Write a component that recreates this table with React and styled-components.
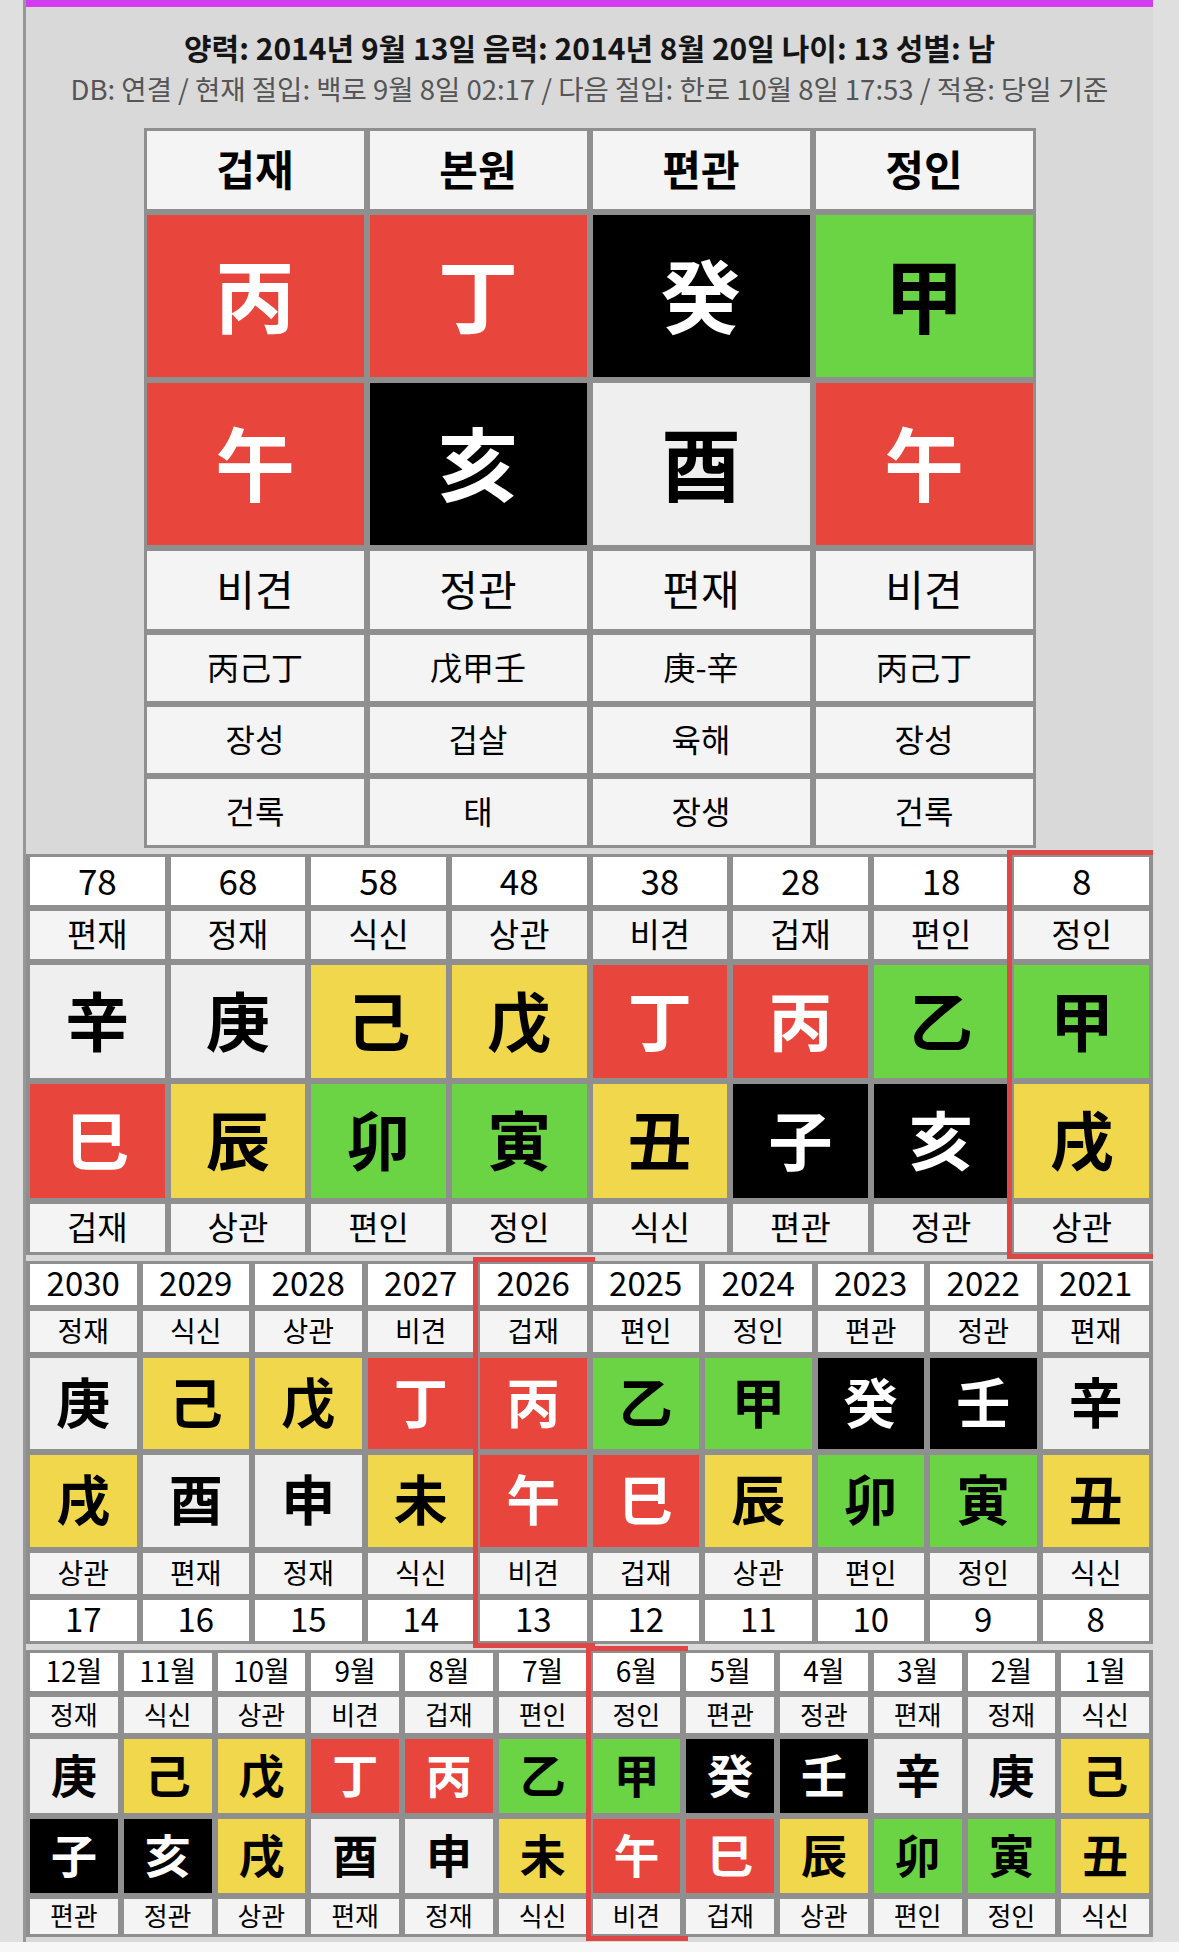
import React from 'react';
import styled, { createGlobalStyle, css } from 'styled-components';

const GlobalStyle = createGlobalStyle`
  html, body {
    margin: 0;
    padding: 0;
    background: #dfdfdf;
  }
  body {
    font-family: "Noto Sans CJK KR", "Noto Sans", sans-serif;
    color: #000;
  }
`;

const ELEMENT = {
  甲: 'wood', 乙: 'wood', 寅: 'wood', 卯: 'wood',
  丙: 'fire', 丁: 'fire', 巳: 'fire', 午: 'fire',
  戊: 'earth', 己: 'earth', 辰: 'earth', 戌: 'earth', 丑: 'earth', 未: 'earth',
  庚: 'metal', 辛: 'metal', 申: 'metal', 酉: 'metal',
  壬: 'water', 癸: 'water', 亥: 'water', 子: 'water',
};

const PALETTE = {
  wood: { bg: '#6bd445', fg: '#000' },
  fire: { bg: '#e8453c', fg: '#fff' },
  earth: { bg: '#f0d74b', fg: '#000' },
  metal: { bg: '#efefef', fg: '#000' },
  water: { bg: '#000', fg: '#fff' },
};

const Page = styled.div`
  width: 1179px;
  min-height: 1952px;
  display: flex;
  flex-direction: column;
`;

const Panel = styled.div`
  margin-left: 23px;
  width: 1130px;
  box-sizing: border-box;
  border-left: 3px solid #979797;
  background: #d9d9d9;
  display: flex;
  flex-direction: column;
  padding-bottom: 5px;
  overflow: hidden;
`;

const TopBar = styled.div`
  height: 7px;
  background: #d03ef0;
`;

const Info = styled.div`
  padding-top: 20px;
  text-align: center;
`;

const InfoMain = styled.div`
  font-size: 30px;
  line-height: 40px;
  font-weight: 700;
  color: #151515;
`;

const InfoSub = styled.div`
  margin-top: 3px;
  font-size: 27.5px;
  line-height: 36px;
  color: #555;
`;

const Table = styled.div`
  display: flex;
  gap: 6px;
  background: #8f8f8f;
  padding: 3px 4px;
  margin-top: 6px;

  ${p => p.$fixed && css`
    width: ${p.$fixed}px;
    box-sizing: border-box;
    padding: 3px;
    align-self: center;
    margin-top: 22px;
  `}
`;

/* current period marker: the right edge sits under the next column */
const Column = styled.div`
  flex: 1 1 0;
  min-width: 0;
  display: flex;
  flex-direction: column;
  gap: 6px;
  position: relative;

  ${p => p.$active && css`
    &::after {
      content: '';
      position: absolute;
      top: -7px;
      bottom: -7px;
      left: -7px;
      right: -8px;
      border: 5px solid #df4747;
      border-right: 0;
      pointer-events: none;
      z-index: 2;
    }
  `}
`;

const Cell = styled.div`
  box-sizing: border-box;
  height: ${p => p.$h}px;
  padding-bottom: 0.11em;
  background: ${p => p.$bg};
  color: ${p => p.$fg};
  font-size: ${p => p.$size}px;
  font-weight: ${p => (p.$bold ? 700 : 400)};
  display: flex;
  align-items: center;
  justify-content: center;
  line-height: 1;
  white-space: nowrap;
`;

const BottomStrip = styled.div`
  height: 10px;
  background: #f7f7f7;
`;

function GridTable({ columns, rows, active, fixed }) {
  return (
    <Table $fixed={fixed}>
      {columns.map((col, i) => (
        <Column key={i} $active={i === active}>
          {rows.map(r => {
            const value = col[r.key];
            const tone = r.glyph ? PALETTE[ELEMENT[value]] : { bg: r.bg, fg: '#000' };
            return (
              <Cell
                key={r.key}
                $h={r.h}
                $size={r.size}
                $bold={r.bold || r.glyph}
                $bg={tone.bg}
                $fg={tone.fg}
              >
                {value}
              </Cell>
            );
          })}
        </Column>
      ))}
    </Table>
  );
}

const zip = (fields) =>
  fields[Object.keys(fields)[0]].map((_, i) =>
    Object.fromEntries(Object.entries(fields).map(([k, arr]) => [k, arr[i]]))
  );

const natal = zip({
  head: ['겁재', '본원', '편관', '정인'],
  stem: [...'丙丁癸甲'],
  branch: [...'午亥酉午'],
  god: ['비견', '정관', '편재', '비견'],
  hidden: ['丙己丁', '戊甲壬', '庚-辛', '丙己丁'],
  stage: ['장성', '겁살', '육해', '장성'],
  star: ['건록', '태', '장생', '건록'],
});

const natalRows = [
  { key: 'head', h: 78, size: 42, bold: true, bg: '#f4f4f4' },
  { key: 'stem', h: 162, size: 80, glyph: true },
  { key: 'branch', h: 162, size: 80, glyph: true },
  { key: 'god', h: 78, size: 42, bg: '#f4f4f4' },
  { key: 'hidden', h: 66, size: 32, bg: '#f4f4f4' },
  { key: 'stage', h: 66, size: 32, bg: '#f4f4f4' },
  { key: 'star', h: 66, size: 32, bg: '#f4f4f4' },
];

const daewoon = zip({
  age: ['78', '68', '58', '48', '38', '28', '18', '8'],
  top: ['편재', '정재', '식신', '상관', '비견', '겁재', '편인', '정인'],
  stem: [...'辛庚己戊丁丙乙甲'],
  branch: [...'巳辰卯寅丑子亥戌'],
  bottom: ['겁재', '상관', '편인', '정인', '식신', '편관', '정관', '상관'],
});

const daewoonRows = [
  { key: 'age', h: 48, size: 35, bg: '#fff' },
  { key: 'top', h: 48, size: 33, bg: '#f4f4f4' },
  { key: 'stem', h: 113, size: 64, glyph: true },
  { key: 'branch', h: 114, size: 64, glyph: true },
  { key: 'bottom', h: 48, size: 33, bg: '#f4f4f4' },
];

const seun = zip({
  year: ['2030', '2029', '2028', '2027', '2026', '2025', '2024', '2023', '2022', '2021'],
  top: ['정재', '식신', '상관', '비견', '겁재', '편인', '정인', '편관', '정관', '편재'],
  stem: [...'庚己戊丁丙乙甲癸壬辛'],
  branch: [...'戌酉申未午巳辰卯寅丑'],
  bottom: ['상관', '편재', '정재', '식신', '비견', '겁재', '상관', '편인', '정인', '식신'],
  age: ['17', '16', '15', '14', '13', '12', '11', '10', '9', '8'],
});

const seunRows = [
  { key: 'year', h: 41, size: 33, bg: '#fff' },
  { key: 'top', h: 41, size: 28, bg: '#f4f4f4' },
  { key: 'stem', h: 91, size: 54, glyph: true },
  { key: 'branch', h: 92, size: 54, glyph: true },
  { key: 'bottom', h: 41, size: 28, bg: '#f4f4f4' },
  { key: 'age', h: 41, size: 33, bg: '#fff' },
];

const monthly = zip({
  month: ['12월', '11월', '10월', '9월', '8월', '7월', '6월', '5월', '4월', '3월', '2월', '1월'],
  top: ['정재', '식신', '상관', '비견', '겁재', '편인', '정인', '편관', '정관', '편재', '정재', '식신'],
  stem: [...'庚己戊丁丙乙甲癸壬辛庚己'],
  branch: [...'子亥戌酉申未午巳辰卯寅丑'],
  bottom: ['편관', '정관', '상관', '편재', '정재', '식신', '비견', '겁재', '상관', '편인', '정인', '식신'],
});

const monthlyRows = [
  { key: 'month', h: 38, size: 28, bg: '#fff' },
  { key: 'top', h: 36, size: 26, bg: '#f4f4f4' },
  { key: 'stem', h: 74, size: 46, glyph: true },
  { key: 'branch', h: 74, size: 46, glyph: true },
  { key: 'bottom', h: 35, size: 26, bg: '#f4f4f4' },
];

export default function App() {
  return (
    <Page>
      <GlobalStyle />
      <Panel>
        <TopBar />
        <Info>
          <InfoMain>양력: 2014년 9월 13일 음력: 2014년 8월 20일 나이: 13 성별: 남</InfoMain>
          <InfoSub>DB: 연결 / 현재 절입: 백로 9월 8일 02:17 / 다음 절입: 한로 10월 8일 17:53 / 적용: 당일 기준</InfoSub>
        </Info>
        <GridTable columns={natal} rows={natalRows} fixed={892} />
        <GridTable columns={daewoon} rows={daewoonRows} active={7} />
        <GridTable columns={seun} rows={seunRows} active={4} />
        <GridTable columns={monthly} rows={monthlyRows} active={6} />
      </Panel>
      <BottomStrip />
    </Page>
  );
}
